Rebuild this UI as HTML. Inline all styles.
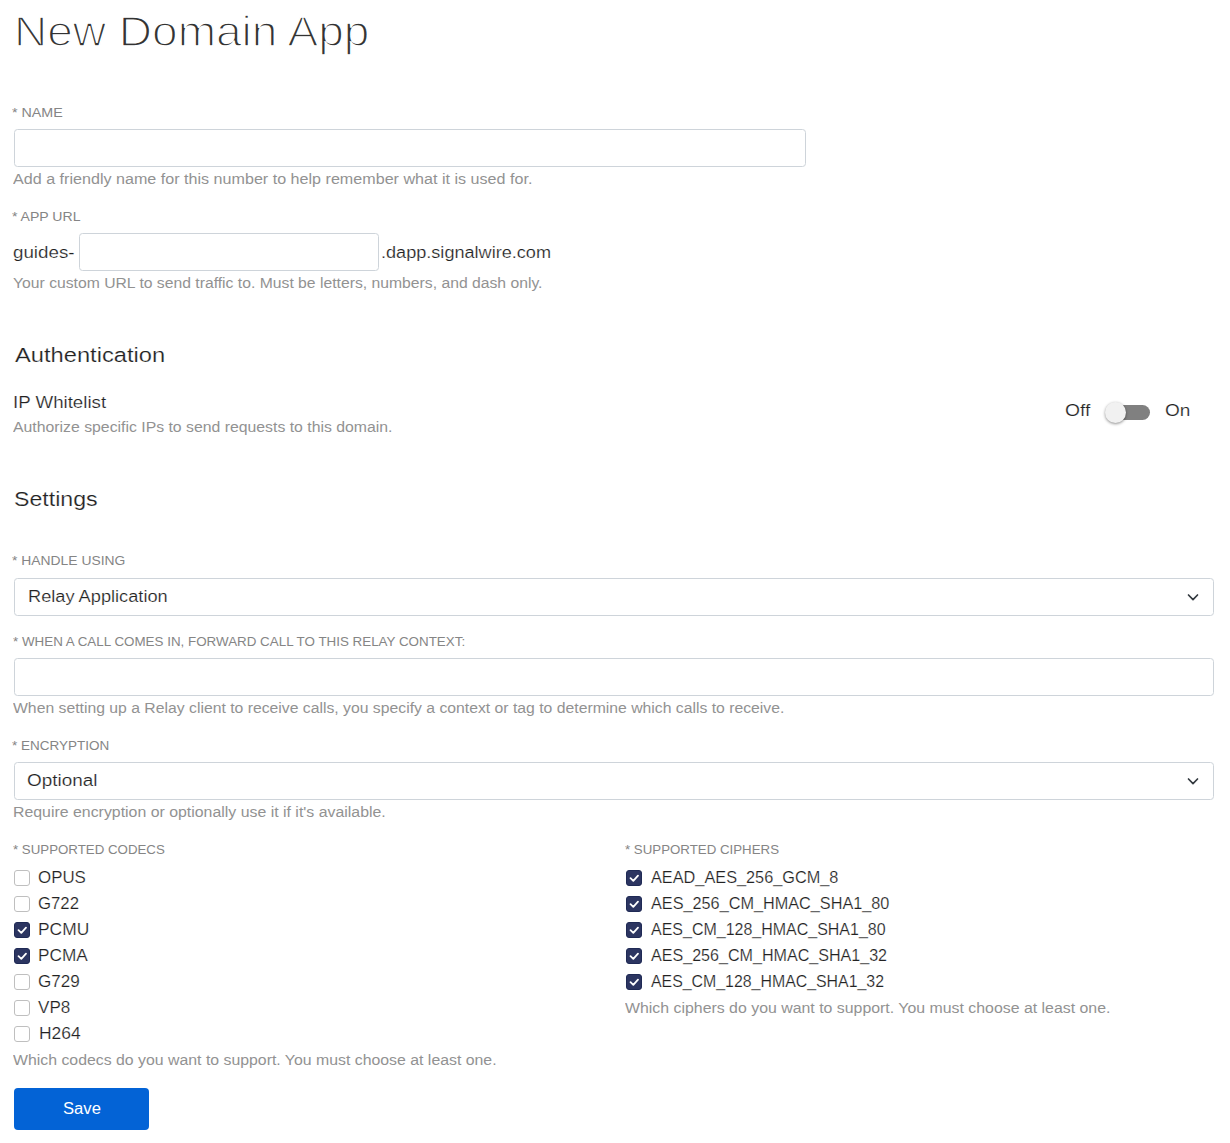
<!DOCTYPE html>
<html><head><meta charset="utf-8"><title>New Domain App</title>
<style>
html,body{margin:0;padding:0;background:#fff;width:1230px;height:1143px;overflow:hidden;position:relative}
.t{position:absolute;font-family:'Liberation Sans',sans-serif;line-height:1;white-space:nowrap;transform-origin:0 0}
.box{position:absolute;box-sizing:border-box;border:1px solid #ced4da;border-radius:3.5px;background:#fff}
.cb{position:absolute;box-sizing:border-box;width:16px;height:16px;border:1px solid #bfbfbf;border-radius:3px;background:#fff}
.cb.on{background:#2c3561;border-color:#1f2a55}
.cb.on svg{position:absolute;left:-1px;top:-1px}
.chev{position:absolute}
</style></head><body>

<div class="box" style="left:14px;top:129px;width:792px;height:38px;"></div>
<div class="box" style="left:79px;top:233px;width:300px;height:38px;"></div>
<div class="box" style="left:14px;top:578px;width:1200px;height:38px;"></div>
<div class="box" style="left:14px;top:658px;width:1200px;height:38px;"></div>
<div class="box" style="left:14px;top:762px;width:1200px;height:38px;"></div>
<svg class="chev" style="left:1186px;top:593.1px" width="16" height="12" viewBox="0 0 16 12"><path d="M2.5 2 L7 6.6 L11.5 2" fill="none" stroke="#343a40" stroke-width="1.7" stroke-linecap="round" stroke-linejoin="round"/></svg>
<svg class="chev" style="left:1186px;top:777.1px" width="16" height="12" viewBox="0 0 16 12"><path d="M2.5 2 L7 6.6 L11.5 2" fill="none" stroke="#343a40" stroke-width="1.7" stroke-linecap="round" stroke-linejoin="round"/></svg>
<div style="position:absolute;left:1112px;top:404.5px;width:38px;height:15px;border-radius:8px;background:#808080"></div>
<div style="position:absolute;left:1105px;top:401.5px;width:21px;height:21px;border-radius:50%;background:#f1f1f1;box-shadow:0 1px 3px rgba(0,0,0,0.45)"></div>
<div style="position:absolute;left:14px;top:1088px;width:135px;height:42px;border-radius:4px;background:#0363d6"></div>
<div class="cb" style="left:14px;top:870px"></div>
<div class="cb" style="left:14px;top:896px"></div>
<div class="cb on" style="left:14px;top:922px"><svg width="16" height="16" viewBox="0 0 16 16"><path d="M4.5 8.1 L7.3 10.8 L12.0 5.6" fill="none" stroke="#fff" stroke-width="1.8" stroke-linecap="round" stroke-linejoin="round"/></svg></div>
<div class="cb on" style="left:14px;top:948px"><svg width="16" height="16" viewBox="0 0 16 16"><path d="M4.5 8.1 L7.3 10.8 L12.0 5.6" fill="none" stroke="#fff" stroke-width="1.8" stroke-linecap="round" stroke-linejoin="round"/></svg></div>
<div class="cb" style="left:14px;top:974px"></div>
<div class="cb" style="left:14px;top:1000px"></div>
<div class="cb" style="left:14px;top:1026px"></div>
<div class="cb on" style="left:626px;top:870px"><svg width="16" height="16" viewBox="0 0 16 16"><path d="M4.5 8.1 L7.3 10.8 L12.0 5.6" fill="none" stroke="#fff" stroke-width="1.8" stroke-linecap="round" stroke-linejoin="round"/></svg></div>
<div class="cb on" style="left:626px;top:896px"><svg width="16" height="16" viewBox="0 0 16 16"><path d="M4.5 8.1 L7.3 10.8 L12.0 5.6" fill="none" stroke="#fff" stroke-width="1.8" stroke-linecap="round" stroke-linejoin="round"/></svg></div>
<div class="cb on" style="left:626px;top:922px"><svg width="16" height="16" viewBox="0 0 16 16"><path d="M4.5 8.1 L7.3 10.8 L12.0 5.6" fill="none" stroke="#fff" stroke-width="1.8" stroke-linecap="round" stroke-linejoin="round"/></svg></div>
<div class="cb on" style="left:626px;top:948px"><svg width="16" height="16" viewBox="0 0 16 16"><path d="M4.5 8.1 L7.3 10.8 L12.0 5.6" fill="none" stroke="#fff" stroke-width="1.8" stroke-linecap="round" stroke-linejoin="round"/></svg></div>
<div class="cb on" style="left:626px;top:974px"><svg width="16" height="16" viewBox="0 0 16 16"><path d="M4.5 8.1 L7.3 10.8 L12.0 5.6" fill="none" stroke="#fff" stroke-width="1.8" stroke-linecap="round" stroke-linejoin="round"/></svg></div>
<div class="t" style="left:14.18px;top:9.80px;font-size:43px;color:#333333;transform:scaleX(1.0699);-webkit-text-stroke:1.5px #fff;">New Domain App</div>
<div class="t" style="left:12.40px;top:106.00px;font-size:13px;color:#858585;transform:scaleX(1.0978);">* NAME</div>
<div class="t" style="left:13.18px;top:171.80px;font-size:14px;color:#929292;transform:scaleX(1.1508);">Add a friendly name for this number to help remember what it is used for.</div>
<div class="t" style="left:12.40px;top:210.00px;font-size:13px;color:#858585;transform:scaleX(1.0810);">* APP URL</div>
<div class="t" style="left:13.39px;top:244.70px;font-size:16px;color:#222222;transform:scaleX(1.1721);-webkit-text-stroke:0.2px #fff;">guides-</div>
<div class="t" style="left:380.71px;top:244.70px;font-size:16px;color:#222222;transform:scaleX(1.1310);-webkit-text-stroke:0.2px #fff;">.dapp.signalwire.com</div>
<div class="t" style="left:13.16px;top:276.00px;font-size:14px;color:#929292;transform:scaleX(1.1228);">Your custom URL to send traffic to. Must be letters, numbers, and dash only.</div>
<div class="t" style="left:14.60px;top:344.80px;font-size:20px;color:#222222;transform:scaleX(1.1849);-webkit-text-stroke:0.2px #fff;">Authentication</div>
<div class="t" style="left:12.85px;top:395.20px;font-size:16px;color:#222222;transform:scaleX(1.1676);-webkit-text-stroke:0.2px #fff;">IP Whitelist</div>
<div class="t" style="left:13.16px;top:420.20px;font-size:14px;color:#929292;transform:scaleX(1.1288);">Authorize specific IPs to send requests to this domain.</div>
<div class="t" style="left:1064.83px;top:403.10px;font-size:16px;color:#222222;transform:scaleX(1.2060);-webkit-text-stroke:0.2px #fff;">Off</div>
<div class="t" style="left:1165.35px;top:403.10px;font-size:16px;color:#222222;transform:scaleX(1.1900);-webkit-text-stroke:0.2px #fff;">On</div>
<div class="t" style="left:13.92px;top:489.00px;font-size:20px;color:#222222;transform:scaleX(1.1575);-webkit-text-stroke:0.2px #fff;">Settings</div>
<div class="t" style="left:12.40px;top:553.90px;font-size:13px;color:#858585;transform:scaleX(1.0672);">* HANDLE USING</div>
<div class="t" style="left:27.76px;top:589.00px;font-size:16px;color:#222222;transform:scaleX(1.1382);-webkit-text-stroke:0.2px #fff;">Relay Application</div>
<div class="t" style="left:13.20px;top:635.30px;font-size:13px;color:#858585;transform:scaleX(1.0294);">* WHEN A CALL COMES IN, FORWARD CALL TO THIS RELAY CONTEXT:</div>
<div class="t" style="left:13.16px;top:701.10px;font-size:14px;color:#929292;transform:scaleX(1.1252);">When setting up a Relay client to receive calls, you specify a context or tag to determine which calls to receive.</div>
<div class="t" style="left:12.40px;top:739.40px;font-size:13px;color:#858585;transform:scaleX(1.0385);">* ENCRYPTION</div>
<div class="t" style="left:26.90px;top:772.70px;font-size:16px;color:#222222;transform:scaleX(1.1817);-webkit-text-stroke:0.2px #fff;">Optional</div>
<div class="t" style="left:12.89px;top:804.90px;font-size:14px;color:#929292;transform:scaleX(1.1339);">Require encryption or optionally use it if it's available.</div>
<div class="t" style="left:12.90px;top:842.70px;font-size:13px;color:#858585;transform:scaleX(1.0217);">* SUPPORTED CODECS</div>
<div class="t" style="left:625.12px;top:842.70px;font-size:13px;color:#858585;transform:scaleX(1.0216);">* SUPPORTED CIPHERS</div>
<div class="t" style="left:13.16px;top:1053.40px;font-size:14px;color:#929292;transform:scaleX(1.1318);">Which codecs do you want to support. You must choose at least one.</div>
<div class="t" style="left:625.42px;top:1001.20px;font-size:14px;color:#929292;transform:scaleX(1.1341);">Which ciphers do you want to support. You must choose at least one.</div>
<div class="t" style="left:62.86px;top:1100.90px;font-size:16px;color:#ffffff;transform:scaleX(1.0389);">Save</div>
<div class="t" style="left:38.30px;top:869.90px;font-size:16px;color:#222222;transform:scaleX(1.0555);-webkit-text-stroke:0.2px #fff;">OPUS</div>
<div class="t" style="left:37.85px;top:895.90px;font-size:16px;color:#222222;transform:scaleX(1.0474);-webkit-text-stroke:0.2px #fff;">G722</div>
<div class="t" style="left:38.11px;top:921.90px;font-size:16px;color:#222222;transform:scaleX(1.0867);-webkit-text-stroke:0.2px #fff;">PCMU</div>
<div class="t" style="left:38.12px;top:947.90px;font-size:16px;color:#222222;transform:scaleX(1.0756);-webkit-text-stroke:0.2px #fff;">PCMA</div>
<div class="t" style="left:37.74px;top:973.90px;font-size:16px;color:#222222;transform:scaleX(1.0676);-webkit-text-stroke:0.2px #fff;">G729</div>
<div class="t" style="left:38.40px;top:999.90px;font-size:16px;color:#222222;transform:scaleX(1.0667);-webkit-text-stroke:0.2px #fff;">VP8</div>
<div class="t" style="left:38.91px;top:1025.90px;font-size:16px;color:#222222;transform:scaleX(1.0892);-webkit-text-stroke:0.2px #fff;">H264</div>
<div class="t" style="left:650.70px;top:869.90px;font-size:16px;color:#222222;transform:scaleX(1.0179);-webkit-text-stroke:0.2px #fff;">AEAD_AES_256_GCM_8</div>
<div class="t" style="left:650.81px;top:895.90px;font-size:16px;color:#222222;transform:scaleX(1.0152);-webkit-text-stroke:0.2px #fff;">AES_256_CM_HMAC_SHA1_80</div>
<div class="t" style="left:650.81px;top:921.90px;font-size:16px;color:#222222;transform:scaleX(0.9991);-webkit-text-stroke:0.2px #fff;">AES_CM_128_HMAC_SHA1_80</div>
<div class="t" style="left:650.57px;top:947.90px;font-size:16px;color:#222222;transform:scaleX(1.0054);-webkit-text-stroke:0.2px #fff;">AES_256_CM_HMAC_SHA1_32</div>
<div class="t" style="left:650.70px;top:973.90px;font-size:16px;color:#222222;transform:scaleX(0.9923);-webkit-text-stroke:0.2px #fff;">AES_CM_128_HMAC_SHA1_32</div>
</body></html>
